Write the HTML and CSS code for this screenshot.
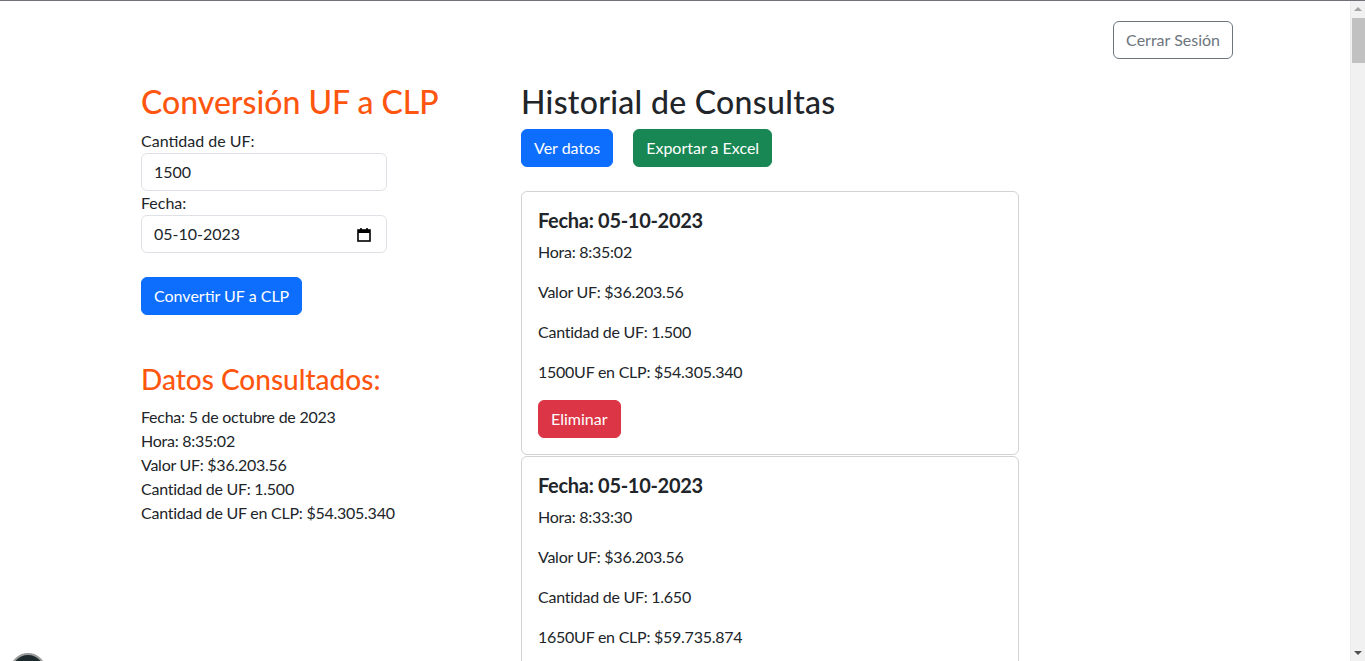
FILE: index.html
```html
<!DOCTYPE html>
<html lang="es">
<head>
<meta charset="utf-8">
<title>Conversión UF a CLP</title>
<link rel="stylesheet" href="styles.css">
</head>
<body>
<div class="page">
  <div class="container">
    <div class="topbar">
      <button class="btn btn-outline">Cerrar Sesión</button>
    </div>
    <div class="row">
      <section class="col-left">
        <h2 class="title-orange">Conversión UF a CLP</h2>
        <label class="label">Cantidad de UF:</label>
        <div class="input">1500</div>
        <label class="label">Fecha:</label>
        <div class="input input-date">
          <span>05-10-2023</span>
          <svg class="cal" width="14" height="15" viewBox="0 0 14 15"><rect x="1" y="3" width="12" height="11" fill="none" stroke="#000" stroke-width="1.6"/><rect x="1" y="3" width="12" height="3" fill="#000"/><rect x="3.2" y="1" width="1.6" height="3" fill="#000"/><rect x="9.2" y="1" width="1.6" height="3" fill="#000"/></svg>
        </div>
        <button class="btn btn-primary btn-convert">Convertir UF a CLP</button>
        <h3 class="title-orange subtitle">Datos Consultados:</h3>
        <div class="data-line">Fecha: 5 de octubre de 2023</div>
        <div class="data-line">Hora: 8:35:02</div>
        <div class="data-line">Valor UF: $36.203.56</div>
        <div class="data-line">Cantidad de UF: 1.500</div>
        <div class="data-line">Cantidad de UF en CLP: $54.305.340</div>
      </section>
      <section class="col-right">
        <h2 class="title-dark">Historial de Consultas</h2>
        <div class="actions">
          <button class="btn btn-primary">Ver datos</button>
          <button class="btn btn-success">Exportar a Excel</button>
        </div>
        <div class="card">
          <h5 class="card-title">Fecha: 05-10-2023</h5>
          <p>Hora: 8:35:02</p>
          <p>Valor UF: $36.203.56</p>
          <p>Cantidad de UF: 1.500</p>
          <p>1500UF en CLP: $54.305.340</p>
          <button class="btn btn-danger">Eliminar</button>
        </div>
        <div class="card">
          <h5 class="card-title">Fecha: 05-10-2023</h5>
          <p>Hora: 8:33:30</p>
          <p>Valor UF: $36.203.56</p>
          <p>Cantidad de UF: 1.650</p>
          <p>1650UF en CLP: $59.735.874</p>
          <button class="btn btn-danger">Eliminar</button>
        </div>
      </section>
    </div>
  </div>
</div>
<div class="scrollbar">
  <div class="sb-up"></div>
  <div class="sb-thumb"></div>
  <div class="sb-down"></div>
</div>
<div class="float-bubble"></div>
</body>
</html>
```
FILE: styles.css
```css
* { box-sizing: border-box; }
html, body { height: 100%; }
body {
  margin: 0;
  overflow: hidden;
  border-top: 1px solid #6f7277;
  background: #fff;
  color: #212529;
  font-family: Lato, "Liberation Sans", Arial, sans-serif;
  font-size: 16px;
  line-height: 1.5;
}
.page {
  width: 1350px;
  height: 660px;
  overflow: hidden;
}
.container {
  width: 1116px;
  margin-left: 117px;
  padding-top: 20px;
}
.topbar {
  display: flex;
  justify-content: flex-end;
}
.row {
  display: flex;
  padding-left: 24px;
  margin-top: 24px;
}
.col-left { width: 380px; }
.col-left .input { width: 246px; }
.col-right { width: 498px; }
h2, h3, h5 { margin: 0 0 8px; font-weight: 500; line-height: 1.2; }
h2 { font-size: 32px; }
h3 { font-size: 28px; }
h5 { font-size: 20px; }
.title-orange { color: #ff560f; }
.title-dark { color: #212529; letter-spacing: 0.3px; }
.label { display: block; }
.data-line, .card p { letter-spacing: -0.25px; }
.input {
  height: 38px;
  border: 1px solid #dee2e6;
  border-radius: 6px;
  padding: 6px 12px;
  color: #212529;
}
.input-date {
  display: flex;
  justify-content: space-between;
  align-items: center;
}
.cal { margin-right: 3px; }
.btn {
  display: inline-block;
  height: 38px;
  padding: 6px 12px;
  border: 1px solid transparent;
  border-radius: 6px;
  font: inherit;
  line-height: 24px;
  color: #fff;
  cursor: pointer;
}
.btn-outline {
  background: #fff;
  border-color: #6c757d;
  color: #6c757d;
}
.btn-primary { background: #0d6efd; border-color: #0d6efd; }
.btn-success { background: #198754; border-color: #198754; }
.btn-danger { background: #dc3545; border-color: #dc3545; }
.btn-convert { margin-top: 24px; }
.subtitle { margin-top: 48px; }
.actions {
  display: flex;
  gap: 20px;
  margin-bottom: 24px;
}
.card {
  border: 1px solid rgba(0,0,0,.175);
  border-radius: 6px;
  padding: 16px;
  margin-bottom: 1px;
}
.card-title { font-weight: 700; letter-spacing: -0.3px; }
.card p { margin: 0 0 16px; }
.scrollbar {
  position: fixed;
  top: 1px;
  right: 0;
  width: 15px;
  bottom: 0;
  background: #f1f1f1;
  border-left: 1px solid #ebebeb;
}
.sb-up, .sb-down {
  position: absolute;
  left: 3px;
  width: 0;
  height: 0;
  border-left: 4px solid transparent;
  border-right: 4px solid transparent;
}
.sb-up { top: 6px; border-bottom: 4px solid #a3a3a3; }
.sb-down { bottom: 6px; border-top: 4px solid #505050; }
.sb-thumb {
  position: absolute;
  top: 17px;
  left: 1px;
  width: 13px;
  height: 45px;
  background: #c1c1c1;
}
.float-bubble {
  position: fixed;
  left: 10px;
  top: 653px;
  width: 36px;
  height: 36px;
  border-radius: 50%;
  background: #1e2a2e;
  border: 2px solid #9a9a9a;
}
```
